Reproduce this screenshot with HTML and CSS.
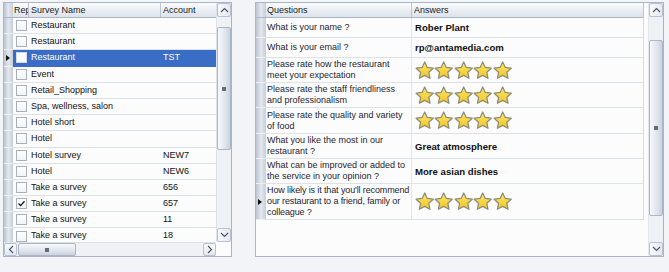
FILE: index.html
```html
<!DOCTYPE html>
<html>
<head>
<meta charset="utf-8">
<link rel="stylesheet" href="styles.css">
</head>
<body>
<svg class="defs" width="0" height="0">
  <defs>
    <linearGradient id="sg" x1="0" y1="0" x2="0" y2="1">
      <stop offset="0" stop-color="#fde968"/>
      <stop offset="1" stop-color="#f1c424"/>
    </linearGradient>
    <symbol id="star" viewBox="0 0 20 20">
      <polygon points="10,1 12.7,6.78 19.03,7.56 14.37,11.92 15.58,18.19 10,15.1 4.42,18.19 5.63,11.92 0.97,7.56 7.3,6.78" fill="url(#sg)" stroke="#8e8b7a" stroke-width="1.3" stroke-linejoin="round"/>
    </symbol>
    <symbol id="up" viewBox="0 0 9 6"><path d="M1 5 L4.5 1.5 L8 5" fill="none" stroke="#4a5260" stroke-width="1.1"/></symbol>
    <symbol id="down" viewBox="0 0 9 6"><path d="M1 1 L4.5 4.5 L8 1" fill="none" stroke="#4a5260" stroke-width="1.1"/></symbol>
    <symbol id="left" viewBox="0 0 6 9"><path d="M5 1 L1.5 4.5 L5 8" fill="none" stroke="#4a5260" stroke-width="1.1"/></symbol>
    <symbol id="right" viewBox="0 0 6 9"><path d="M1 1 L4.5 4.5 L1 8" fill="none" stroke="#4a5260" stroke-width="1.1"/></symbol>
  </defs>
</svg>
<div class="page">
  <div class="grid lgrid">
    <div class="lmain">
      <div class="lhead">
        <div class="ind"></div>
        <div class="hc lc-chk">Rep</div>
        <div class="hc lc-name">Survey Name</div>
        <div class="hc lc-acc">Account</div>
      </div>
      <div class="lrow"><div class="ind"></div><div class="lc-chk"><span class="cb"></span></div><div class="lc-name">Restaurant</div><div class="lc-acc"></div></div>
      <div class="lrow"><div class="ind"></div><div class="lc-chk"><span class="cb"></span></div><div class="lc-name">Restaurant</div><div class="lc-acc"></div></div>
      <div class="lrow sel"><div class="ind"><span class="tri"></span></div><div class="lc-chk"><span class="cb"></span></div><div class="lc-name">Restaurant</div><div class="lc-acc">TST</div></div>
      <div class="lrow"><div class="ind"></div><div class="lc-chk"><span class="cb"></span></div><div class="lc-name">Event</div><div class="lc-acc"></div></div>
      <div class="lrow"><div class="ind"></div><div class="lc-chk"><span class="cb"></span></div><div class="lc-name">Retail_Shopping</div><div class="lc-acc"></div></div>
      <div class="lrow"><div class="ind"></div><div class="lc-chk"><span class="cb"></span></div><div class="lc-name">Spa, wellness, salon</div><div class="lc-acc"></div></div>
      <div class="lrow"><div class="ind"></div><div class="lc-chk"><span class="cb"></span></div><div class="lc-name">Hotel short</div><div class="lc-acc"></div></div>
      <div class="lrow"><div class="ind"></div><div class="lc-chk"><span class="cb"></span></div><div class="lc-name">Hotel</div><div class="lc-acc"></div></div>
      <div class="lrow"><div class="ind"></div><div class="lc-chk"><span class="cb"></span></div><div class="lc-name">Hotel survey</div><div class="lc-acc">NEW7</div></div>
      <div class="lrow"><div class="ind"></div><div class="lc-chk"><span class="cb"></span></div><div class="lc-name">Hotel</div><div class="lc-acc">NEW6</div></div>
      <div class="lrow"><div class="ind"></div><div class="lc-chk"><span class="cb"></span></div><div class="lc-name">Take a survey</div><div class="lc-acc">656</div></div>
      <div class="lrow"><div class="ind"></div><div class="lc-chk"><span class="cb checked"><svg viewBox="0 0 9 9" width="9" height="9"><path d="M1.5 4.5 L3.6 6.6 L7.5 2.2" fill="none" stroke="#111" stroke-width="1.3"/></svg></span></div><div class="lc-name">Take a survey</div><div class="lc-acc">657</div></div>
      <div class="lrow"><div class="ind"></div><div class="lc-chk"><span class="cb"></span></div><div class="lc-name">Take a survey</div><div class="lc-acc">11</div></div>
      <div class="lrow"><div class="ind"></div><div class="lc-chk"><span class="cb"></span></div><div class="lc-name">Take a survey</div><div class="lc-acc">18</div></div>
    </div>
    <div class="vscroll lv">
      <div class="sbtn"><svg width="9" height="6"><use href="#up"/></svg></div>
      <div class="vtrack">
        <div class="vthumb"><span class="grip"></span></div>
      </div>
      <div class="sbtn"><svg width="9" height="6"><use href="#down"/></svg></div>
    </div>
    <div class="hscroll">
      <div class="sbtn"><svg width="6" height="9"><use href="#left"/></svg></div>
      <div class="htrack">
        <div class="hthumb"><span class="grip"></span></div>
      </div>
      <div class="sbtn"><svg width="6" height="9"><use href="#right"/></svg></div>
    </div>
    <div class="corner"></div>
  </div>

  <div class="grid rgrid">
    <div class="rmain">
      <div class="rhead">
        <div class="ind"></div>
        <div class="hc rc-q">Questions</div>
        <div class="hc rc-a">Answers</div>
      </div>
      <div class="rrow h20"><div class="ind"></div><div class="rc-q">What is your name ?</div><div class="rc-a"><b>Rober Plant</b></div></div>
      <div class="rrow h20"><div class="ind"></div><div class="rc-q">What is your email ?</div><div class="rc-a"><b>rp@antamedia.com</b></div></div>
      <div class="rrow h25"><div class="ind"></div><div class="rc-q">Please rate how the restaurant<br>meet your expectation</div><div class="rc-a"><div class="stars"><svg><use href="#star"/></svg><svg><use href="#star"/></svg><svg><use href="#star"/></svg><svg><use href="#star"/></svg><svg><use href="#star"/></svg></div></div></div>
      <div class="rrow h25"><div class="ind"></div><div class="rc-q">Please rate the staff friendliness<br>and professionalism</div><div class="rc-a"><div class="stars"><svg><use href="#star"/></svg><svg><use href="#star"/></svg><svg><use href="#star"/></svg><svg><use href="#star"/></svg><svg><use href="#star"/></svg></div></div></div>
      <div class="rrow h26"><div class="ind"></div><div class="rc-q">Please rate the quality and variety<br>of food</div><div class="rc-a"><div class="stars"><svg><use href="#star"/></svg><svg><use href="#star"/></svg><svg><use href="#star"/></svg><svg><use href="#star"/></svg><svg><use href="#star"/></svg></div></div></div>
      <div class="rrow h25"><div class="ind"></div><div class="rc-q">What you like the most in our<br>restaurant ?</div><div class="rc-a"><b>Great atmosphere</b></div></div>
      <div class="rrow h25"><div class="ind"></div><div class="rc-q">What can be improved or added to<br>the service in your opinion ?</div><div class="rc-a"><b>More asian dishes</b></div></div>
      <div class="rrow h36"><div class="ind"><span class="tri"></span></div><div class="rc-q tight">How likely is it that you'll recommend<br>our restaurant to a friend, family or<br>colleague ?</div><div class="rc-a"><div class="stars"><svg><use href="#star"/></svg><svg><use href="#star"/></svg><svg><use href="#star"/></svg><svg><use href="#star"/></svg><svg><use href="#star"/></svg></div></div></div>
    </div>
    <div class="rgap"></div>
    <div class="vscroll rv">
      <div class="sbtn"><svg width="9" height="6"><use href="#up"/></svg></div>
      <div class="vtrack">
        <div class="vthumb"><span class="grip"></span></div>
      </div>
      <div class="sbtn"><svg width="9" height="6"><use href="#down"/></svg></div>
    </div>
  </div>
</div>
</body>
</html>
```

FILE: styles.css
```css
* { box-sizing: border-box; }
html, body { margin: 0; padding: 0; }
body {
  background: #f3f4f7;
  font-family: "Liberation Sans", Arial, sans-serif;
  font-size: 9px;
  color: #111;
  width: 669px;
  height: 272px;
  overflow: hidden;
}
.defs { position: absolute; }
.page {
  display: flex;
  align-items: flex-start;
  padding: 2px 0 0 3px;
  gap: 23px;
}
.grid {
  border: 1px solid #a9b5c7;
  background: #fcfcfd;
  display: grid;
}

/* ---------- Left grid ---------- */
.lgrid {
  width: 229px;
  height: 255px;
  grid-template-columns: 212px 15px;
  grid-template-rows: 239px 14px;
}
.lmain { overflow: hidden; }
.lhead, .lrow {
  display: grid;
  grid-template-columns: 9px 16px 132px 1fr;
}
.lhead {
  height: 15px;
  border-bottom: 1px solid #a9b6c8;
  background: linear-gradient(#fbfcfd, #e8ecf2 60%, #dde3ec);
}
.hc {
  line-height: 14px;
  padding-left: 2px;
  white-space: nowrap;
  overflow: hidden;
  color: #1a1a1a;
}
.lhead .lc-chk, .lhead .lc-name { border-right: 1px solid #b9c3d2; }
.lhead .lc-chk { padding-left: 1px; }
.lrow {
  height: 16.2px;
  line-height: 15px;
}
.lrow > div:not(.ind) { border-bottom: 1px solid #dde2ea; }
.lrow .lc-name, .lrow .lc-acc { padding-left: 2px; white-space: nowrap; overflow: hidden; }
.lrow .lc-chk { display: flex; align-items: center; padding-left: 3px; }
.cb {
  width: 11px;
  height: 11px;
  border: 1px solid #a8b0bc;
  background: linear-gradient(#ffffff, #f1f3f6);
  display: flex;
  align-items: center;
  justify-content: center;
}
.lrow.sel > div:not(.ind) { background: #3a6ec6; color: #fff; border-bottom-color: #3a6ec6; }
.lrow.sel .cb { background: #fff; border-color: #d5dbe5; }

.ind {
  position: relative;
  background: linear-gradient(to right, #bcc5d2, #e4e8ee 55%, #cdd4de);
  border-bottom: 1px solid #eef1f5;
  border-right: 1px solid #c9d0da;
}
.lhead .ind, .rhead .ind { border-bottom: none; }
.tri {
  position: absolute;
  left: 2px;
  top: 50%;
  margin-top: -3px;
  width: 0;
  height: 0;
  border-top: 3px solid transparent;
  border-bottom: 3px solid transparent;
  border-left: 4px solid #111;
}

/* ---------- Scrollbars ---------- */
.vscroll {
  display: flex;
  flex-direction: column;
  background: #eef1f5;
  border-left: 1px solid #dde2ea;
}
.lv { grid-row: 1 / 2; grid-column: 2; }
.vscroll .sbtn { height: 14px; }
.sbtn {
  display: flex;
  align-items: center;
  justify-content: center;
  background: linear-gradient(to right, #f8f9fb, #e3e8ef);
  border: 1px solid #b7c1cf;
  border-radius: 2px;
  flex: none;
}
.vtrack { flex: 1; position: relative; }
.vthumb {
  position: absolute;
  left: 0;
  right: 0;
  border: 1px solid #aab5c5;
  border-radius: 2px;
  background: linear-gradient(to right, #f7f8fa, #dfe5ed 60%, #c9d2de);
  display: flex;
  align-items: center;
  justify-content: center;
}
.lv .vthumb { top: 10px; height: 123px; }
.rv .vthumb { top: 23px; height: 176px; }
.grip {
  width: 4px;
  height: 4px;
  background:
    radial-gradient(circle, #5a6270 0.7px, transparent 0.8px) 0 0 / 2px 2px;
}
.hscroll {
  display: flex;
  background: #eef1f5;
  border-top: 1px solid #dde2ea;
}
.hscroll .sbtn { width: 13px; background: linear-gradient(#f8f9fb, #e3e8ef); }
.htrack { flex: 1; position: relative; }
.hthumb {
  position: absolute;
  top: 0;
  bottom: 0;
  left: 1px;
  width: 58px;
  border: 1px solid #aab5c5;
  border-radius: 2px;
  background: linear-gradient(#f7f8fa, #dfe5ed 60%, #c9d2de);
  display: flex;
  align-items: center;
  justify-content: center;
}
.corner { background: #fcfcfd; }

/* ---------- Right grid ---------- */
.rgrid {
  width: 409px;
  height: 255px;
  grid-template-columns: 388px 4px 15px;
}
.rmain { overflow: hidden; }
.rhead, .rrow {
  display: grid;
  grid-template-columns: 10px 146px 1fr;
}
.rhead {
  height: 15px;
  border-bottom: 1px solid #a9b6c8;
  background: linear-gradient(#fbfcfd, #e8ecf2 60%, #dde3ec);
  border-right: 1px solid #b9c3d2;
}
.rhead .rc-q { border-right: 1px solid #b9c3d2; padding-left: 1px; }
.rrow { border-right: 1px solid #d6dce5; }
.rrow > div:not(.ind) { border-bottom: 1px solid #dde2ea; display: flex; align-items: center; }
.rrow .rc-q {
  border-right: 1px solid #e1e5ec;
  padding-left: 1px;
  line-height: 10.8px;
  color: #1c1c30;
  white-space: nowrap;
  overflow: hidden;
}
.rrow .rc-q.tight { letter-spacing: -0.12px; }
.rrow .rc-a { padding-left: 3px; }
.rc-a b { font-size: 9.6px; font-weight: bold; color: #111; }
.h20 { height: 20px; }
.h25 { height: 25px; }
.h26 { height: 26px; }
.h36 { height: 36px; }
.stars { display: flex; }
.stars svg { width: 19.4px; height: 19px; }
.rgap { background: #fcfcfd; }
.rv { border-left: 1px solid #e3e7ee; }
```
